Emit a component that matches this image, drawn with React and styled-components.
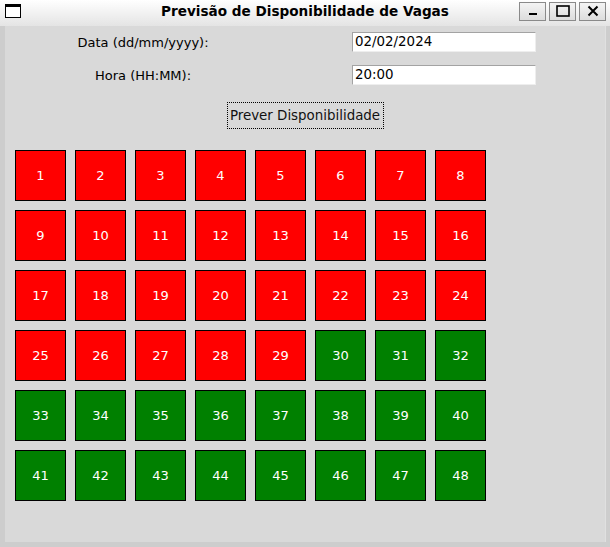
import styled, { createGlobalStyle } from "styled-components";

const GlobalStyle = createGlobalStyle`
  html, body {
    margin: 0;
    padding: 0;
    background: #cccccc;
  }
  body {
    font-family: "DejaVu Sans", "Liberation Sans", sans-serif;
  }
`;

const Window = styled.div`
  width: 610px;
  height: 547px;
  display: flex;
  flex-direction: column;
  background: #cdcdcd;
  overflow: hidden;
`;

const TitleBar = styled.div`
  height: 26px;
  flex: none;
  display: flex;
  align-items: center;
  background: linear-gradient(#ffffff, #e4e4e4);
`;

const WinIcon = styled.div`
  width: 14px;
  height: 10px;
  margin-left: 5px;
  margin-top: -4px;
  border: 1px solid #000;
  border-top-width: 3px;
  background: #fff;
`;

const Title = styled.div`
  flex: 1;
  text-align: center;
  font-weight: bold;
  font-size: 13.6px;
  color: #000;
  margin-left: 70px;
  margin-top: -4px;
`;

const Controls = styled.div`
  display: flex;
  gap: 3px;
  margin-right: 4px;
  margin-top: -4px;
`;

const CtrlButton = styled.div`
  width: 25px;
  height: 17px;
  border: 1px solid #8a8a8a;
  background: linear-gradient(#f4f4f4, #dcdcdc);
  display: flex;
  align-items: center;
  justify-content: center;
`;

const Frame = styled.div`
  flex: 1;
  margin: 0 4px 5px 5px;
  background: #d9d9d9;
  border-right: 1px solid #e0e0e0;
  display: flex;
  flex-direction: column;
`;

const Form = styled.div`
  display: flex;
  flex-direction: column;
  gap: 13px;
  padding-top: 6px;
`;

const Row = styled.div`
  display: flex;
  align-items: center;
  height: 20px;
`;

const Label = styled.div`
  width: 276px;
  text-align: center;
  font-size: 13px;
  color: #000;
`;

const Entry = styled.div`
  margin-left: 71px;
  width: 180px;
  height: 18px;
  background: #fff;
  border: 1px solid;
  border-color: #a3a3a3 #eeeeee #eeeeee #a3a3a3;
  font-size: 13.4px;
  line-height: 18px;
  padding-left: 2px;
  box-sizing: content-box;
  color: #000;
`;

const ButtonRow = styled.div`
  display: flex;
  justify-content: center;
  margin-top: 17px;
`;

const Button = styled.div`
  width: 155px;
  height: 25px;
  border: 1px dotted #000;
  background: #d9d9d9;
  display: flex;
  align-items: center;
  justify-content: center;
  font-size: 13.4px;
  color: #111;
`;

const Grid = styled.div`
  display: grid;
  grid-template-columns: repeat(8, 51px);
  grid-auto-rows: 51px;
  gap: 9px;
  padding: 21px 0 0 10px;
`;

const Spot = styled.div`
  box-sizing: border-box;
  border: 1px solid #000;
  background: ${(p) => (p.$free ? "#008000" : "#ff0000")};
  color: #fff;
  font-size: 13px;
  display: flex;
  align-items: center;
  justify-content: center;
`;

const spots = Array.from({ length: 48 }, (_, i) => i + 1);

export default function App() {
  return (
    <>
      <GlobalStyle />
      <Window>
        <TitleBar>
          <WinIcon />
          <Title>Previsão de Disponibilidade de Vagas</Title>
          <Controls>
            <CtrlButton>
              <svg width="10" height="10" viewBox="0 0 10 10">
                <rect x="1" y="7" width="8" height="2" fill="#000" />
              </svg>
            </CtrlButton>
            <CtrlButton>
              <svg width="14" height="12" viewBox="0 0 14 12">
                <rect x="1" y="1" width="12" height="10" fill="none" stroke="#000" strokeWidth="1.6" />
              </svg>
            </CtrlButton>
            <CtrlButton>
              <svg width="12" height="12" viewBox="0 0 12 12">
                <path d="M1.5 1.5 L10.5 10.5 M10.5 1.5 L1.5 10.5" stroke="#000" strokeWidth="2" />
              </svg>
            </CtrlButton>
          </Controls>
        </TitleBar>
        <Frame>
          <Form>
            <Row>
              <Label>Data (dd/mm/yyyy):</Label>
              <Entry>02/02/2024</Entry>
            </Row>
            <Row>
              <Label>Hora (HH:MM):</Label>
              <Entry>20:00</Entry>
            </Row>
          </Form>
          <ButtonRow>
            <Button>Prever Disponibilidade</Button>
          </ButtonRow>
          <Grid>
            {spots.map((n) => (
              <Spot key={n} $free={n >= 30}>
                {n}
              </Spot>
            ))}
          </Grid>
        </Frame>
      </Window>
    </>
  );
}
